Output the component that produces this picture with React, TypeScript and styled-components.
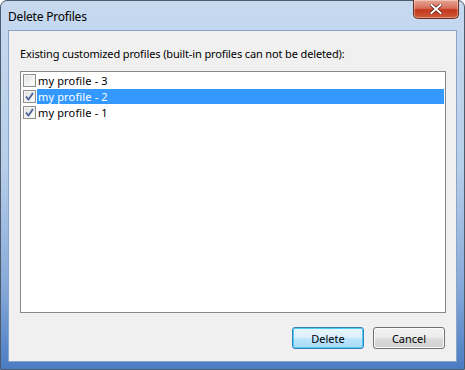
import React, { useState } from "react";
import styled, { createGlobalStyle } from "styled-components";

const GlobalStyle = createGlobalStyle`
  html, body {
    margin: 0;
    padding: 0;
    background: #ffffff;
  }
  body {
    font-family: "Noto Sans", "Open Sans", sans-serif;
    font-size: 11px;
  }
`;

const profiles = [
  { name: "my profile - 3", checked: false },
  { name: "my profile - 2", checked: true },
  { name: "my profile - 1", checked: true },
];

const App = () => {
  const [items, setItems] = useState(profiles);
  const [selected, setSelected] = useState(1);

  const toggle = (i: number) =>
    setItems(items.map((p, idx) => (idx === i ? { ...p, checked: !p.checked } : p)));

  return (
    <>
      <GlobalStyle />
      <Window>
        <TitleBar>
          <Title>Delete Profiles</Title>
          <CloseButton aria-label="Close">
            <svg width="12" height="10" viewBox="0 0 12 10">
              <path d="M1.5 1 L10.5 9 M10.5 1 L1.5 9" stroke="#5a1b10" strokeWidth="3.4" strokeLinecap="square" />
              <path d="M1.5 1 L10.5 9 M10.5 1 L1.5 9" stroke="#ffffff" strokeWidth="2" strokeLinecap="square" />
            </svg>
          </CloseButton>
        </TitleBar>
        <Client>
          <Label>Existing customized profiles (built-in profiles can not be deleted):</Label>
          <ListBox>
            {items.map((p, i) => (
              <Row key={p.name} onClick={() => setSelected(i)}>
                <Check $checked={p.checked} onClick={() => toggle(i)}>
                  {p.checked && (
                    <svg width="9" height="9" viewBox="0 0 9 9">
                      <path d="M1 4.5 L3.5 7.5 L8 1" stroke="#4a5f97" strokeWidth="1.8" fill="none" />
                    </svg>
                  )}
                </Check>
                <ItemText $selected={selected === i}>{p.name}</ItemText>
              </Row>
            ))}
          </ListBox>
          <ButtonRow>
            <Button $default>Delete</Button>
            <Button>Cancel</Button>
          </ButtonRow>
        </Client>
      </Window>
    </>
  );
};

export default App;

const Window = styled.div`
  width: 465px;
  height: 370px;
  box-sizing: border-box;
  display: flex;
  flex-direction: column;
  padding: 0 7px 7px 7px;
  border: 1px solid #4d5a6b;
  border-radius: 7px 7px 0 0;
  background: linear-gradient(180deg, #c6d9ef 0%, #b7cee9 45%, #86a9d9 78%, #4a7cc3 100%);
`;

const TitleBar = styled.div`
  height: 29px;
  display: flex;
  justify-content: space-between;
  align-items: flex-start;
`;

const Title = styled.span`
  margin-top: 7px;
  color: #000;
  font-size: 12px;
  letter-spacing: -0.2px;
`;

const CloseButton = styled.div`
  width: 46px;
  height: 19px;
  margin-top: -1px;
  margin-right: -2px;
  box-sizing: border-box;
  display: flex;
  align-items: center;
  justify-content: center;
  border: 1px solid #6b2c22;
  border-top: none;
  border-radius: 0 0 5px 5px;
  background: linear-gradient(180deg, #e8a596 0%, #d6705b 45%, #c4361c 55%, #d05a3c 100%);
  box-shadow: inset 0 0 0 1px rgba(255, 255, 255, 0.35);
`;

const Client = styled.div`
  flex: 1;
  display: flex;
  flex-direction: column;
  background: #f0f0f0;
  border: 1px solid #8aa4c8;
  padding: 15px 10px 12px 11px;
`;

const Label = styled.div`
  color: #000;
  font-size: 11px;
  line-height: 15px;
  letter-spacing: -0.13px;
  margin-bottom: 10px;
`;

const ListBox = styled.div`
  height: 242px;
  box-sizing: border-box;
  background: #fff;
  border: 1px solid #828790;
`;

const Row = styled.div`
  height: 16px;
  display: flex;
  align-items: center;
  padding-left: 2px;
`;

const Check = styled.span<{ $checked: boolean }>`
  width: 13px;
  height: 13px;
  box-sizing: border-box;
  display: flex;
  align-items: center;
  justify-content: center;
  border: 1px solid #8f8f8f;
  background: linear-gradient(135deg, #dcdcdc 0%, #f4f4f4 60%, #ffffff 100%);
  box-shadow: inset 0 0 0 1px #f4f4f4;
  flex: none;
`;

const ItemText = styled.span<{ $selected: boolean }>`
  height: 15px;
  line-height: 15px;
  flex: ${(p) => (p.$selected ? 1 : "none")};
  margin-left: 1px;
  margin-right: 1px;
  padding-left: 1px;
  font-size: 11px;
  letter-spacing: 0.15px;
  color: ${(p) => (p.$selected ? "#fff" : "#000")};
  background: ${(p) => (p.$selected ? "#3399ff" : "transparent")};
`;

const ButtonRow = styled.div`
  margin-top: auto;
  display: flex;
  justify-content: flex-end;
  gap: 9px;
  padding-right: 1px;
`;

const Button = styled.button<{ $default?: boolean }>`
  width: 72px;
  height: 22px;
  box-sizing: border-box;
  font-family: "Noto Sans", "Open Sans", sans-serif;
  font-size: 11px;
  color: #000;
  padding: 0;
  border-radius: 3px;
  border: 1px solid ${(p) => (p.$default ? "#3c7fb1" : "#707070")};
  background: ${(p) =>
    p.$default
      ? "linear-gradient(180deg, #eaf6fd 0%, #d9f0fc 50%, #bee6fd 51%, #a7d9f5 100%)"
      : "linear-gradient(180deg, #f2f2f2 0%, #ebebeb 50%, #dddddd 51%, #cfcfcf 100%)"};
  box-shadow: inset 0 0 0 1px ${(p) => (p.$default ? "#48d0fb" : "#fcfcfc")};
`;
